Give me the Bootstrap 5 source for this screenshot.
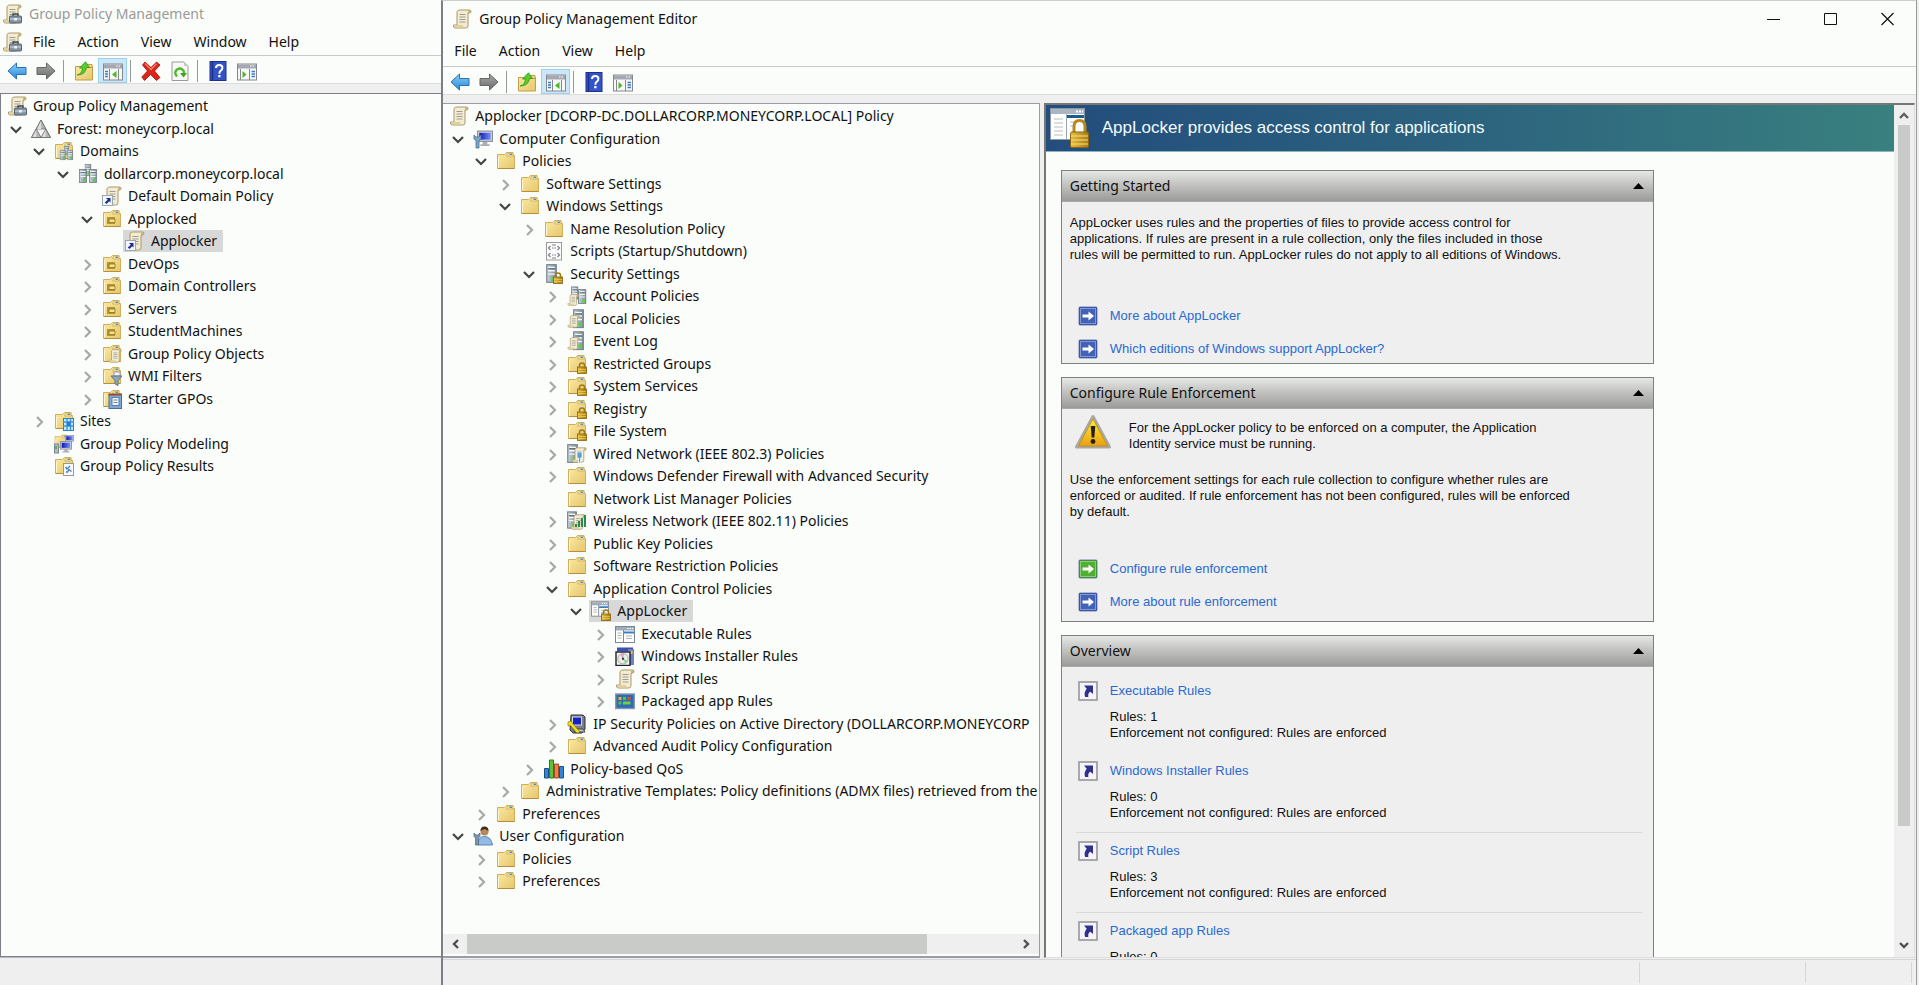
<!DOCTYPE html>
<html lang="en">
<head>
<meta charset="utf-8">
<meta name="viewport" content="width=device-width, initial-scale=1">
<title>Group Policy Management Editor</title>
<link rel="stylesheet" href="https://cdn.jsdelivr.net/npm/bootstrap@5.3.0/dist/css/bootstrap.min.css">
<style>
  :root { --paper: #fafdf9; --chrome: #efefef; --thumb: #c9cbc8; --line: #c9cacc; --edge: #7d7e88; }
  body { font: 14px/20px "Noto Sans", "Open Sans", sans-serif; color: #111; background: var(--chrome); }
  button { font: inherit; color: inherit; background: none; border: 0; padding: 0; }
  svg { display: block; flex: none; }
  .ico { width: 20px; height: 20px; }
  .manager { width: 23%; }
  .editor { border-left: 2px solid var(--edge); border-right: 1px solid #999; border-top: 1px solid #ccc; margin-right: 2px; min-width: 0; }
  .top-area { background: var(--paper); }
  .manager .title-row { height: 28px; padding-left: 2px; color: #9a9a9a; }
  .manager .menu-row { height: 28px; padding-left: 2px; }
  .editor .title-row { height: 35px; padding-left: 9px; }
  .editor .menu-row { height: 31px; }
  .title-row { gap: 7px; }
  .menu-row { border-bottom: 1px solid var(--line); }
  .menu-row button { padding: 0 11px; }
  .tools { height: 28px; padding: 2px 0 0 2px; border-bottom: 1px solid #dadbda; }
  .tools button { width: 29px; height: 25px; display: flex; align-items: center; justify-content: center; }
  .tools .pressed { background: #cce7f8; outline: 1px solid #9ad0f0; outline-offset: -1px; }
  .tools i { width: 1px; height: 22px; background: #999; margin: 0 5px 0 3px; }
  .gap-strip { height: 9px; }
  .pane { background: var(--paper); border: 1px solid var(--edge); }
  .manager .status { height: 28px; border-top: 1px solid #b9babf; }
  .editor .status { height: 28px; border-top: 1px solid #d6d6d6; margin-top: 1px; }
  .status div { border-right: 1px solid #d6d6d6; margin: 2px 0; }
  .tree { list-style: none; margin: 0; padding: 1px 0 0; overflow: hidden; flex: 1; min-height: 0; }
  .tree li { display: flex; align-items: center; height: 22px; white-space: nowrap; }
  .tree li:nth-child(even) { height: 23px; }
  .tree .exp { width: 21px; flex: none; height: 20px; }
  .tree .exp svg { width: 16px; height: 20px; }
  .node { display: flex; align-items: center; gap: 6px; padding: 0 6px 0 2px; height: 22px; }
  .node.sel { background: #d8d8d8; }
  .l0 { padding-left: 4px; } .l1 { padding-left: 7px; } .l2 { padding-left: 30px; } .l3 { padding-left: 54px; }
  .l4 { padding-left: 78px; } .l5 { padding-left: 101px; } .l6 { padding-left: 125px; } .l7 { padding-left: 149px; }
  .tree-pane { width: 40.5%; border-left: 0; border-width: 1px 1px 2px 0; border-color: #9b9ca4; }
  .hbar { height: 20px; background: var(--chrome); margin-bottom: 2px; }
  .vbar { width: 20px; padding-bottom: 2px; background: var(--chrome); }
  .hbar .track, .vbar .track { flex: 1; }
  .thumb { background: var(--thumb); }
  .detail-pane { margin-left: 4px; margin-right: 1px; border: 2px solid #777; border-width: 2px 1px 1px 2px; border-right-color: #ddd; border-bottom-color: #ddd; font: 13px/16px "Liberation Sans", Arial, sans-serif; }
  .hero { height: 47px; background: linear-gradient(90deg, #234d7d, #2c637e 50%, #39807f); color: #f2fbfb; font-size: 17px; border-bottom: 1px solid #8ab5bd; gap: 12px; padding-left: 4px; }
  .sheet { padding: 18px 16px 0 15px; }
  .box { width: 593px; max-width: 100%; background: var(--chrome); border: 1px solid #7e807d; margin-bottom: 13px; }
  .box-head { height: 31px; padding: 0 9px 0 8px; background: linear-gradient(#e6e8e5, #c3c4c2 45%, #9b9c9a); font: 14px/20px "Noto Sans", "Open Sans", sans-serif; border-bottom: 1px solid #aaa; }
  .box p { margin: 0; }
  .box a { color: #2a69cf; text-decoration: none; }
  .links { display: grid; gap: 13px; padding: 0 0 4px 16px; }
  .links.roomy { padding-bottom: 9px; }
  .links a, .rule a { display: flex; align-items: center; gap: 12px; height: 20px; width: max-content; }
  .intro { padding: 13px 8px 43px; }
  .usage { padding: 20px 8px 39px; }
  .warn { padding: 5px 12px 0; gap: 17px; }
  .warn p { padding-top: 6px; }
  .rules { padding-top: 14px; }
  .rule { height: 72px; border-bottom: 1px solid #d9d9d9; margin: 0 11px 8px 14px; }
  .rule.bare { border-color: transparent; }
  .rule a { padding-left: 2px; }
  .rule p { padding: 8px 0 0 34px; }
</style>
</head>
<body>
<svg width="0" height="0" class="position-absolute" aria-hidden="true">
  <defs>
    <linearGradient id="gf" x1="0" y1="0" x2="1" y2="1"><stop offset="0" stop-color="#fbeaa4"/><stop offset="1" stop-color="#e5c66c"/></linearGradient>
    <linearGradient id="gb" x1="0" y1="0" x2="0" y2="1"><stop offset="0" stop-color="#8fd0f8"/><stop offset="1" stop-color="#2586d6"/></linearGradient>
    <linearGradient id="gg" x1="0" y1="0" x2="0" y2="1"><stop offset="0" stop-color="#a9a9a9"/><stop offset="1" stop-color="#6a6a6a"/></linearGradient>
    <linearGradient id="gm" x1="0" y1="0" x2="1" y2="0"><stop offset="0" stop-color="#0b16b8"/><stop offset="1" stop-color="#7c90f5"/></linearGradient>
    <linearGradient id="gs" x1="0" y1="0" x2="1" y2="0"><stop offset="0" stop-color="#c9d3da"/><stop offset="1" stop-color="#7f8e99"/></linearGradient>
    <linearGradient id="gw" x1="0" y1="0" x2="0" y2="1"><stop offset="0" stop-color="#fff12e"/><stop offset="1" stop-color="#e8a012"/></linearGradient>
    <linearGradient id="gl" x1="0" y1="0" x2="1" y2="0"><stop offset="0" stop-color="#e6bd3e"/><stop offset="1" stop-color="#a97c0e"/></linearGradient>

    <symbol id="down" viewBox="0 0 16 20"><path d="M3 8l5 5 5-5" fill="none" stroke="#444" stroke-width="2.200"/></symbol>
    <symbol id="right" viewBox="0 0 16 20"><path d="M6 6l5 5-5 5" fill="none" stroke="#a8a8a8" stroke-width="2.200"/></symbol>
    <symbol id="sb-left" viewBox="0 0 16 16"><path d="M11 4L7 8l4 4" fill="none" stroke="#505050" stroke-width="2.4"/></symbol>
    <symbol id="sb-right" viewBox="0 0 16 16"><path d="M5 4l4 4-4 4" fill="none" stroke="#505050" stroke-width="2.4"/></symbol>
    <symbol id="sb-up" viewBox="0 0 16 16"><path d="M4 11l4-4 4 4" fill="none" stroke="#606060" stroke-width="2.4"/></symbol>
    <symbol id="sb-down" viewBox="0 0 16 16"><path d="M4 6l4 4 4-4" fill="none" stroke="#505050" stroke-width="2.4"/></symbol>

    <symbol id="scroll" viewBox="0 0 20 20"><path d="M5 2.5q1-1.5 3-1.500h9.500q1.500 0 1.500 1.500t-1.500 1.500h-1.500v12.500q0 2.500-2.500 2.500h-10q-2 0-2-2v-1h3.500z" fill="#f4ecd0" stroke="#a8986c" stroke-width="1"/><path d="M16 4V2.500q0-1.500 1.500-1.500T19 2.500 17.500 4z" fill="#c7ae72"/><path d="M2 16h9q0 2.500 2 2.500H4q-2 0-2-2.500z" fill="#e0d19c"/><path d="M7.500 5.500h6M7.500 8h6M7.500 10.500h6M7.500 13h6" stroke="#9b9b9b"/></symbol>
    <symbol id="gpm" viewBox="0 0 20 20"><use href="#scroll"/><path d="M11 12v-2h5v2" fill="none" stroke="#444" stroke-width="1.300"/><rect x="7.500" y="12" width="12" height="7" rx="1" fill="#8495a6" stroke="#55626f"/><path d="M8 15h11" stroke="#d3dbe2"/><rect x="12" y="14" width="3" height="2.500" fill="#eee"/></symbol>
    <symbol id="shortcut-s" viewBox="0 0 20 20"><rect x=".5" y="9.500" width="10" height="10" fill="#f4f4fa" stroke="#9aa"/><path d="M4 12h4.500v4.500L7.200 15.200 4.500 18 2.800 16.500l3-2.800z" fill="#1b2a94"/></symbol>
    <symbol id="scroll-link" viewBox="0 0 20 20"><use href="#scroll"/><use href="#shortcut-s"/></symbol>
    <symbol id="folder" viewBox="0 0 20 20"><path d="M1.500 3.500h7l2-2h6.500v3h1.500v13h-17z" fill="url(#gf)" stroke="#cfae5c"/><path d="M10.500 5l1.500-3h5v3z" fill="#f6e7a8" stroke="#cfae5c" stroke-width=".8"/><path d="M13.500 3.300h2.500" stroke="#3f93d8" stroke-width="1.400"/><path d="M2.500 6v10.500" stroke="#fff6cf"/><path d="M2 17.500h16.500" stroke="#b88f36"/></symbol>
    <symbol id="ou" viewBox="0 0 20 20"><use href="#folder"/><path d="M5 8h8v7H5z" fill="#b59636"/><path d="M7 10h6v3.500H7z" fill="#f5e38e" stroke="#8d6f1d" stroke-width=".8"/></symbol>
    <symbol id="srv" viewBox="0 0 8 14"><rect x=".5" y=".5" width="7" height="13" fill="url(#gs)" stroke="#6f7e89" stroke-width=".8"/><path d="M1.500 2.500h5M1.500 5h5M1.500 7.500h5" stroke="#f2f6f8"/><path d="M1.500 3.500h5" stroke="#4d5b66" stroke-width=".7"/><rect x="4" y="10" width="2.500" height="2.500" fill="#55d636"/></symbol>
    <symbol id="domain" viewBox="0 0 20 20"><use href="#srv" x="6.500" y="0" width="7" height="12"/><use href="#srv" x="1" y="5" width="8" height="14"/><use href="#srv" x="11" y="5" width="8" height="14"/></symbol>
    <symbol id="domains" viewBox="0 0 20 20"><use href="#folder"/><use href="#domain" x="5" y="5" width="15" height="15"/></symbol>
    <symbol id="forest" viewBox="0 0 20 20"><path d="M10 1l9.500 17.500H.5z" fill="#f5f5f5" stroke="#777"/><path d="M10 1l4.700 9H5.300zM5.300 10l4.700 8.500H.5zM14.700 10l4.800 8.500H10z" fill="#b4b4b4" stroke="#6f6f6f" stroke-width=".8"/><path d="M10 2v8H6zM5.300 11v7H1.500zM14.700 11v7H11z" fill="#dedede"/></symbol>
    <symbol id="gpo" viewBox="0 0 20 20"><use href="#folder"/><use href="#scroll" x="6" y="5" width="14" height="14"/></symbol>
    <symbol id="wmi" viewBox="0 0 20 20"><use href="#folder"/><rect x="12" y="6" width="6" height="4" fill="#f5f5ff" stroke="#99a"/><path d="M9 10h11l-4 4.500v5l-3-1.500v-3.500z" fill="#8fa6bb" stroke="#5d7488"/></symbol>
    <symbol id="starter" viewBox="0 0 20 20"><use href="#folder"/><rect x="7" y="5.500" width="12.500" height="14" fill="#7fa9d4" stroke="#4d6d94"/><path d="M6.500 5.500h13.500" stroke="#9a4a2c" stroke-width="2"/><rect x="10" y="8.500" width="7" height="8" fill="#eef5fb" stroke="#5a7faa"/><path d="M11.500 11h4M11.500 13.500h4" stroke="#789"/></symbol>
    <symbol id="sites" viewBox="0 0 20 20"><use href="#folder"/><rect x="9.500" y="7.500" width="10" height="12" fill="#c5e8fb" stroke="#2d7fc4"/><path d="M13 7v12M16.500 7v12M9 11h11M9 15h11" stroke="#3b93d9" stroke-width="1.300"/><rect x="13" y="11" width="3" height="4" fill="#2b78be"/></symbol>
    <symbol id="mon" viewBox="0 0 14 14"><rect x=".5" y=".5" width="13" height="9" fill="#cfd3dc" stroke="#8b8f9b"/><rect x="2" y="2" width="10" height="6" fill="url(#gm)"/><path d="M5 10h4v2h2v1.500H3V12h2z" fill="#a9adb6"/></symbol>
    <symbol id="model" viewBox="0 0 20 20"><use href="#folder" width="15" height="15"/><use href="#mon" x="11" y="1" width="9" height="9"/><use href="#mon" x="6" y="7" width="12" height="12"/><rect x=".5" y="10" width="4" height="9" fill="#b4bcc2" stroke="#7a858d"/><path d="M2 12v3" stroke="#2fb52f" stroke-width="1.500"/></symbol>
    <symbol id="results" viewBox="0 0 20 20"><use href="#folder"/><rect x="9.500" y="7.500" width="10" height="12" fill="#f8f8fc" stroke="#999"/><path d="M11.500 11l1.500 2 3-3M12 16h1.500l1.500-2.500 2.500 2" fill="none" stroke="#3d7fc0" stroke-width="1.300"/></symbol>
    <symbol id="computer" viewBox="0 0 20 20"><use href="#mon" x="4" y="1" width="16" height="17"/><path d="M1 6v4l2 1.500V19h3v-7.500L8 10V6L6 8H3z" fill="#7aa7cc" stroke="#4b6f8f" stroke-width=".8"/></symbol>
    <symbol id="user" viewBox="0 0 20 20"><circle cx="11.500" cy="5.500" r="4" fill="#b9875a"/><path d="M7.500 5q0-4.500 4-4.500t4 4.500q-3-2-4-2t-4 2z" fill="#3f2a1b"/><path d="M5 19q0-8.500 6.500-8.500T19.500 19z" fill="#8fbbe6" stroke="#5a86b5"/><path d="M1 7v3.500L2.500 12v7h3v-7L7 10.500V7L5 9H3z" fill="#7b97b0" stroke="#4d6478" stroke-width=".7"/></symbol>
    <symbol id="script" viewBox="0 0 20 20"><rect x="2.500" y="1.500" width="15" height="17.500" fill="#fbfbfb" stroke="#9c9c9c"/><path d="M6.500 5L4.500 7l2 2M13.500 5l2 2-2 2M6.500 12l-2 2 2 2M13.500 12l2 2-2 2M8 7h1.500M10.500 7h1.500M8 14h1.500M10.500 14h1.500M8 4h4M8 17h4" fill="none" stroke="#7f7f8a" stroke-width="1.200"/></symbol>
    <symbol id="lock" viewBox="0 0 10 12"><path d="M2.500 6V3.500q0-2.500 2.500-2.500t2.500 2.500V6" fill="none" stroke="#a07a18" stroke-width="1.500"/><rect x=".5" y="5" width="9" height="6.500" fill="url(#gl)" stroke="#86610a" stroke-width=".8"/><path d="M1 7.500h8M1 9.500h8" stroke="#f4d873" stroke-width=".6"/></symbol>
    <symbol id="security" viewBox="0 0 20 20"><use href="#srv" x="2" y="0" width="11" height="19"/><use href="#lock" x="9" y="8" width="10" height="12"/></symbol>
    <symbol id="account" viewBox="0 0 20 20"><use href="#srv" x="4" y="0" width="7.500" height="14"/><use href="#srv" x="11" y="2" width="8.500" height="17"/><use href="#scroll" x="0" y="8" width="12" height="12"/></symbol>
    <symbol id="local" viewBox="0 0 20 20"><use href="#srv" x="6" y="0" width="11" height="19.500"/><use href="#scroll" x="0" y="6" width="13" height="13"/></symbol>
    <symbol id="flock" viewBox="0 0 20 20"><use href="#folder"/><use href="#lock" x="10" y="8" width="10" height="12"/></symbol>
    <symbol id="wired" viewBox="0 0 20 20"><use href="#srv" x="0" y="0" width="11" height="19"/><use href="#scroll" x="4" y="3" width="16" height="16"/><path d="M10 8h5v6h-1.500v5h-2v-5H10z" fill="#5b9fd6" stroke="#fff" stroke-width=".7"/></symbol>
    <symbol id="wireless" viewBox="0 0 20 20"><use href="#srv" x="0" y="0" width="10" height="18"/><use href="#scroll" x="3" y="3" width="16" height="16"/><path d="M9 16v-3M12 16v-6M15 16V7M18 16V4" stroke="#2b8a4c" stroke-width="2"/></symbol>
    <symbol id="window" viewBox="0 0 20 20"><rect x=".5" y="2.500" width="19" height="16" fill="#fff" stroke="#7b8793"/><path d="M1 3h18v3.500H1z" fill="#9fadbb"/><path d="M12 4.500h6" stroke="#fff" stroke-dasharray="1.500 1"/><path d="M8.500 6v12" stroke="#7b8793"/><path d="M9 8.500h10" stroke="#3a7fc4" stroke-width="2"/><path d="M2.500 9h4M2.500 11.500h4M2.500 14h4M11 12h6M11 14.500h6" stroke="#b0b0b0"/></symbol>
    <symbol id="applocker" viewBox="0 0 20 20"><use href="#window" y="-2" width="18" height="19"/><use href="#lock" x="10" y="8" width="10" height="12"/></symbol>
    <symbol id="installer" viewBox="0 0 20 20"><path d="M2 1.500h16v4H2z" fill="#3c4fb5"/><rect x="13" y="3" width="6" height="16" fill="#6f7fc8"/><path d="M14 5h3.500v3H14z" fill="#e5c648"/><rect x="1" y="6" width="14" height="13.500" fill="#f2f2f2" stroke="#222" stroke-width="1.400"/><circle cx="8" cy="12.800" r="5.200" fill="#e8eee8" stroke="#999" stroke-width=".8"/><path d="M8 12.800L5 8.500l4-.7z" fill="#ec9ad4"/><path d="M8 12.800l4.500 2-2.500 2.500z" fill="#7fe08f"/><circle cx="8" cy="12.800" r="1.200" fill="#444"/></symbol>
    <symbol id="package" viewBox="0 0 20 20"><rect x=".7" y="3" width="18.600" height="14.500" fill="#2f6ab4" stroke="#8698ab" stroke-width="1.400"/><path d="M3.500 6h3v3h-3z" fill="#f2b51d"/><path d="M8 6h3v3H8zM3.500 10.500h3v3h-3z" fill="#55c436"/><path d="M12.500 6h3v3h-3z" fill="#e8492a"/><path d="M8 10.500h7.500v3H8z" fill="#6fd13e"/></symbol>
    <symbol id="ipsec" viewBox="0 0 20 20"><path d="M4 1h12l2 2v12l-3 4H6l-3-3z" fill="#7d7f88" stroke="#333"/><rect x="5.500" y="3" width="9" height="8" fill="#1523c4" stroke="#ddd"/><path d="M6 15h10l2 3H8z" fill="#c3c6cd" stroke="#444"/><path d="M1 8l3-1 1.500 2.500 7 8-1 1.500-2-.5-6-7-2.500.5z" fill="#f3e21c" stroke="#8b7d00" stroke-width=".7"/></symbol>
    <symbol id="qos" viewBox="0 0 20 20"><path d="M.5 9.500h4V19h-4z" fill="#2f86d8" stroke="#1b4f86"/><path d="M5.500 1h4v18h-4z" fill="#5cc23c" stroke="#2f7a1d"/><path d="M10.500 5h4v14h-4z" fill="#ef7f4c" stroke="#a54a20"/><path d="M15.500 7.500h4V19h-4z" fill="#2f86d8" stroke="#1b4f86"/></symbol>

    <symbol id="back" viewBox="0 0 20 20"><path d="M1 10l8.500-8v4.500H19v7H9.500V18z" fill="url(#gb)" stroke="#2673b4"/></symbol>
    <symbol id="fwd" viewBox="0 0 20 20"><path d="M19 10l-8.500-8v4.500H1v7h9.500V18z" fill="url(#gg)" stroke="#666"/></symbol>
    <symbol id="up" viewBox="0 0 20 20"><path d="M1.500 5.500h17v13.500h-17z" fill="url(#gf)" stroke="#c29d43"/><path d="M12 3.500h6v3h-6z" fill="#f4dc8c" stroke="#c29d43"/><path d="M3 14q5-1 5.500-7H5.500L11.500.8l4 5.700H12.500q-1 7.500-9.500 7.500z" fill="#56cf2c" stroke="#2d9415" stroke-width=".8"/></symbol>
    <symbol id="panel" viewBox="0 0 20 20"><rect x=".5" y="3" width="19" height="16" fill="#f6f7f8" stroke="#84878d"/><path d="M1 3.500h18v4H1z" fill="#a4a9b1"/><path d="M13 5h5" stroke="#fff" stroke-dasharray="1.500 1"/></symbol>
    <symbol id="pane-l" viewBox="0 0 20 20"><use href="#panel"/><path d="M6.500 8v11M15.500 8v11" stroke="#84878d"/><path d="M2 10.500h3M2 13h3M2 15.500h3" stroke="#3a7fc4" stroke-width="1.400"/><path d="M13.500 10v7L9 13.500z" fill="#4fb71f"/></symbol>
    <symbol id="pane-r" viewBox="0 0 20 20"><use href="#panel"/><path d="M3.500 8v11M12.500 8v11" stroke="#84878d"/><path d="M14.500 10.500h3.500M14.500 13h3.500M14.500 15.500h3.500" stroke="#3a7fc4" stroke-width="1.400"/><path d="M5.500 10v7l4-3.500z" fill="#4fb71f"/></symbol>
    <symbol id="delete" viewBox="0 0 20 20"><path d="M4 1l6 5.500L15.500 1l3.500 3-5.500 6 5.500 6.500-3.500 3-6-6-6 6L.8 16 6.500 10 1.500 4z" fill="#dd2418" stroke="#9c130b" stroke-width=".8"/><path d="M4 2.500l6 6 5.500-5.800" fill="none" stroke="#f58074" stroke-width="1.300"/></symbol>
    <symbol id="refresh" viewBox="0 0 20 20"><path d="M2 1h12l4 4v14.500H2z" fill="#f7f7f7" stroke="#9a9a9a"/><path d="M14 1v4h4z" fill="#ccc"/><path d="M7 15.500q-3.500-4 0-7 4-2.500 6.500 1.200.6 1.300.3 2.800" fill="none" stroke="#4dba2c" stroke-width="2.400"/><path d="M10 12h7l-3.500 4.500z" fill="#3fa521"/></symbol>
    <symbol id="help" viewBox="0 0 20 20"><rect x="2" y=".5" width="16" height="19" fill="#3453c9" stroke="#1d318c"/><path d="M4.500 1v18" stroke="#1d318c" stroke-width="1.500"/><path d="M8 7q0-3 3.200-3t3.200 2.700q0 2-1.600 3-1.400.9-1.400 3" fill="none" stroke="#fff" stroke-width="2"/><rect x="10.200" y="14" width="2.300" height="2.300" fill="#fff"/></symbol>

    <symbol id="go" viewBox="0 0 20 20"><rect x="1" y="1" width="18" height="18" rx="1" fill="currentColor" stroke="#2c4083" stroke-opacity=".6"/><rect x="2.500" y="2.500" width="15" height="15" fill="none" stroke="#fff" stroke-opacity=".35"/><path d="M4.500 8.500h6v-3L16 10l-5.500 4.500v-3h-6z" fill="#fff"/></symbol>
    <symbol id="jump" viewBox="0 0 20 20"><rect x="1" y="1" width="18" height="18" fill="#f5f5f9" stroke="#8e8e96" stroke-width="1.500"/><path d="M6 4.500h9v8.500l-2.700-2.300q-2.600 1.300-2 5.300H7.200q-1.700-4.500 1.500-8.300z" fill="#2e3288"/></symbol>
    <symbol id="caution" viewBox="0 0 38 36"><path d="M19 2.500L35.500 33h-33z" fill="url(#gw)" stroke="#a8a8a0" stroke-width="3" stroke-linejoin="round"/><path d="M19 5L33.500 32h-29z" fill="url(#gw)" stroke="#c98a10" stroke-width=".8"/><path d="M16.700 12h4.600l-1 11.500h-2.600z" fill="#2a1d0e"/><circle cx="19" cy="27.500" r="2.400" fill="#2a1d0e"/></symbol>
  </defs>
</svg>

<div class="d-flex vh-100 overflow-hidden">

  <section class="manager d-flex flex-column flex-shrink-0" aria-label="Group Policy Management">
    <div class="top-area">
      <div class="title-row d-flex align-items-center"><svg class="ico"><use href="#gpm"/></svg><span>Group Policy Management</span></div>
      <nav class="menu-row d-flex align-items-center"><svg class="ico"><use href="#gpm"/></svg><button>File</button><button>Action</button><button>View</button><button>Window</button><button>Help</button></nav>
      <div class="tools d-flex align-items-center" role="toolbar">
        <button aria-label="Back"><svg class="ico"><use href="#back"/></svg></button><button aria-label="Forward"><svg class="ico"><use href="#fwd"/></svg></button><i></i>
        <button aria-label="Up one level"><svg class="ico"><use href="#up"/></svg></button><button class="pressed" aria-label="Console tree"><svg class="ico"><use href="#pane-l"/></svg></button><i></i>
        <button aria-label="Delete"><svg class="ico"><use href="#delete"/></svg></button><button aria-label="Refresh"><svg class="ico"><use href="#refresh"/></svg></button><i></i>
        <button aria-label="Help"><svg class="ico"><use href="#help"/></svg></button><button aria-label="Action pane"><svg class="ico"><use href="#pane-r"/></svg></button>
      </div>
    </div>
    <div class="gap-strip"></div>
    <div class="pane d-flex flex-column flex-grow-1 border-end-0 overflow-hidden">
      <ul class="tree" role="tree">
        <li class="l0"><span class="node"><svg class="ico"><use href="#gpm"/></svg>Group Policy Management</span></li>
        <li class="l1"><button class="exp" aria-label="Collapse"><svg><use href="#down"/></svg></button><span class="node"><svg class="ico"><use href="#forest"/></svg>Forest: moneycorp.local</span></li>
        <li class="l2"><button class="exp" aria-label="Collapse"><svg><use href="#down"/></svg></button><span class="node"><svg class="ico"><use href="#domains"/></svg>Domains</span></li>
        <li class="l3"><button class="exp" aria-label="Collapse"><svg><use href="#down"/></svg></button><span class="node"><svg class="ico"><use href="#domain"/></svg>dollarcorp.moneycorp.local</span></li>
        <li class="l4"><span class="exp"></span><span class="node"><svg class="ico"><use href="#scroll-link"/></svg>Default Domain Policy</span></li>
        <li class="l4"><button class="exp" aria-label="Collapse"><svg><use href="#down"/></svg></button><span class="node"><svg class="ico"><use href="#ou"/></svg>Applocked</span></li>
        <li class="l5"><span class="exp"></span><span class="node sel"><svg class="ico"><use href="#scroll-link"/></svg>Applocker</span></li>
        <li class="l4"><button class="exp" aria-label="Expand"><svg><use href="#right"/></svg></button><span class="node"><svg class="ico"><use href="#ou"/></svg>DevOps</span></li>
        <li class="l4"><button class="exp" aria-label="Expand"><svg><use href="#right"/></svg></button><span class="node"><svg class="ico"><use href="#ou"/></svg>Domain Controllers</span></li>
        <li class="l4"><button class="exp" aria-label="Expand"><svg><use href="#right"/></svg></button><span class="node"><svg class="ico"><use href="#ou"/></svg>Servers</span></li>
        <li class="l4"><button class="exp" aria-label="Expand"><svg><use href="#right"/></svg></button><span class="node"><svg class="ico"><use href="#ou"/></svg>StudentMachines</span></li>
        <li class="l4"><button class="exp" aria-label="Expand"><svg><use href="#right"/></svg></button><span class="node"><svg class="ico"><use href="#gpo"/></svg>Group Policy Objects</span></li>
        <li class="l4"><button class="exp" aria-label="Expand"><svg><use href="#right"/></svg></button><span class="node"><svg class="ico"><use href="#wmi"/></svg>WMI Filters</span></li>
        <li class="l4"><button class="exp" aria-label="Expand"><svg><use href="#right"/></svg></button><span class="node"><svg class="ico"><use href="#starter"/></svg>Starter GPOs</span></li>
        <li class="l2"><button class="exp" aria-label="Expand"><svg><use href="#right"/></svg></button><span class="node"><svg class="ico"><use href="#sites"/></svg>Sites</span></li>
        <li class="l2"><span class="exp"></span><span class="node"><svg class="ico"><use href="#model"/></svg>Group Policy Modeling</span></li>
        <li class="l2"><span class="exp"></span><span class="node"><svg class="ico"><use href="#results"/></svg>Group Policy Results</span></li>
      </ul>
    </div>
    <div class="status"></div>
  </section>

  <section class="editor d-flex flex-column flex-grow-1" aria-label="Group Policy Management Editor">
    <div class="top-area">
      <div class="title-row d-flex align-items-center"><svg class="ico"><use href="#scroll"/></svg><span class="flex-grow-1">Group Policy Management Editor</span>
        <div class="d-flex">
          <button aria-label="Minimize" class="px-3"><svg width="25" height="14"><path d="M6 7.500h13" stroke="#111"/></svg></button>
          <button aria-label="Maximize" class="px-3"><svg width="25" height="14"><path d="M6.500 1.500h12v11h-12z" fill="none" stroke="#111"/></svg></button>
          <button aria-label="Close" class="px-3"><svg width="25" height="14"><path d="M6.500 1l12 12M18.500 1l-12 12" stroke="#111" stroke-width="1.200"/></svg></button>
        </div>
      </div>
      <nav class="menu-row d-flex align-items-center"><button>File</button><button>Action</button><button>View</button><button>Help</button></nav>
      <div class="tools d-flex align-items-center" role="toolbar">
        <button aria-label="Back"><svg class="ico"><use href="#back"/></svg></button><button aria-label="Forward"><svg class="ico"><use href="#fwd"/></svg></button><i></i>
        <button aria-label="Up one level"><svg class="ico"><use href="#up"/></svg></button><button class="pressed" aria-label="Console tree"><svg class="ico"><use href="#pane-l"/></svg></button><i></i>
        <button aria-label="Help"><svg class="ico"><use href="#help"/></svg></button><button aria-label="Action pane"><svg class="ico"><use href="#pane-r"/></svg></button>
      </div>
    </div>
    <div class="gap-strip"></div>
    <div class="d-flex flex-grow-1 overflow-hidden">
      <div class="pane tree-pane d-flex flex-column flex-shrink-0">
        <ul class="tree" role="tree">
          <li class="l0"><span class="node"><svg class="ico"><use href="#scroll"/></svg>Applocker [DCORP-DC.DOLLARCORP.MONEYCORP.LOCAL] Policy</span></li>
          <li class="l1"><button class="exp" aria-label="Collapse"><svg><use href="#down"/></svg></button><span class="node"><svg class="ico"><use href="#computer"/></svg>Computer Configuration</span></li>
          <li class="l2"><button class="exp" aria-label="Collapse"><svg><use href="#down"/></svg></button><span class="node"><svg class="ico"><use href="#folder"/></svg>Policies</span></li>
          <li class="l3"><button class="exp" aria-label="Expand"><svg><use href="#right"/></svg></button><span class="node"><svg class="ico"><use href="#folder"/></svg>Software Settings</span></li>
          <li class="l3"><button class="exp" aria-label="Collapse"><svg><use href="#down"/></svg></button><span class="node"><svg class="ico"><use href="#folder"/></svg>Windows Settings</span></li>
          <li class="l4"><button class="exp" aria-label="Expand"><svg><use href="#right"/></svg></button><span class="node"><svg class="ico"><use href="#folder"/></svg>Name Resolution Policy</span></li>
          <li class="l4"><span class="exp"></span><span class="node"><svg class="ico"><use href="#script"/></svg>Scripts (Startup/Shutdown)</span></li>
          <li class="l4"><button class="exp" aria-label="Collapse"><svg><use href="#down"/></svg></button><span class="node"><svg class="ico"><use href="#security"/></svg>Security Settings</span></li>
          <li class="l5"><button class="exp" aria-label="Expand"><svg><use href="#right"/></svg></button><span class="node"><svg class="ico"><use href="#account"/></svg>Account Policies</span></li>
          <li class="l5"><button class="exp" aria-label="Expand"><svg><use href="#right"/></svg></button><span class="node"><svg class="ico"><use href="#local"/></svg>Local Policies</span></li>
          <li class="l5"><button class="exp" aria-label="Expand"><svg><use href="#right"/></svg></button><span class="node"><svg class="ico"><use href="#local"/></svg>Event Log</span></li>
          <li class="l5"><button class="exp" aria-label="Expand"><svg><use href="#right"/></svg></button><span class="node"><svg class="ico"><use href="#flock"/></svg>Restricted Groups</span></li>
          <li class="l5"><button class="exp" aria-label="Expand"><svg><use href="#right"/></svg></button><span class="node"><svg class="ico"><use href="#flock"/></svg>System Services</span></li>
          <li class="l5"><button class="exp" aria-label="Expand"><svg><use href="#right"/></svg></button><span class="node"><svg class="ico"><use href="#flock"/></svg>Registry</span></li>
          <li class="l5"><button class="exp" aria-label="Expand"><svg><use href="#right"/></svg></button><span class="node"><svg class="ico"><use href="#flock"/></svg>File System</span></li>
          <li class="l5"><button class="exp" aria-label="Expand"><svg><use href="#right"/></svg></button><span class="node"><svg class="ico"><use href="#wired"/></svg>Wired Network (IEEE 802.3) Policies</span></li>
          <li class="l5"><button class="exp" aria-label="Expand"><svg><use href="#right"/></svg></button><span class="node"><svg class="ico"><use href="#folder"/></svg>Windows Defender Firewall with Advanced Security</span></li>
          <li class="l5"><span class="exp"></span><span class="node"><svg class="ico"><use href="#folder"/></svg>Network List Manager Policies</span></li>
          <li class="l5"><button class="exp" aria-label="Expand"><svg><use href="#right"/></svg></button><span class="node"><svg class="ico"><use href="#wireless"/></svg>Wireless Network (IEEE 802.11) Policies</span></li>
          <li class="l5"><button class="exp" aria-label="Expand"><svg><use href="#right"/></svg></button><span class="node"><svg class="ico"><use href="#folder"/></svg>Public Key Policies</span></li>
          <li class="l5"><button class="exp" aria-label="Expand"><svg><use href="#right"/></svg></button><span class="node"><svg class="ico"><use href="#folder"/></svg>Software Restriction Policies</span></li>
          <li class="l5"><button class="exp" aria-label="Collapse"><svg><use href="#down"/></svg></button><span class="node"><svg class="ico"><use href="#folder"/></svg>Application Control Policies</span></li>
          <li class="l6"><button class="exp" aria-label="Collapse"><svg><use href="#down"/></svg></button><span class="node sel"><svg class="ico"><use href="#applocker"/></svg>AppLocker</span></li>
          <li class="l7"><button class="exp" aria-label="Expand"><svg><use href="#right"/></svg></button><span class="node"><svg class="ico"><use href="#window"/></svg>Executable Rules</span></li>
          <li class="l7"><button class="exp" aria-label="Expand"><svg><use href="#right"/></svg></button><span class="node"><svg class="ico"><use href="#installer"/></svg>Windows Installer Rules</span></li>
          <li class="l7"><button class="exp" aria-label="Expand"><svg><use href="#right"/></svg></button><span class="node"><svg class="ico"><use href="#scroll"/></svg>Script Rules</span></li>
          <li class="l7"><button class="exp" aria-label="Expand"><svg><use href="#right"/></svg></button><span class="node"><svg class="ico"><use href="#package"/></svg>Packaged app Rules</span></li>
          <li class="l5"><button class="exp" aria-label="Expand"><svg><use href="#right"/></svg></button><span class="node"><svg class="ico"><use href="#ipsec"/></svg>IP Security Policies on Active Directory (DOLLARCORP.MONEYCORP</span></li>
          <li class="l5"><button class="exp" aria-label="Expand"><svg><use href="#right"/></svg></button><span class="node"><svg class="ico"><use href="#folder"/></svg>Advanced Audit Policy Configuration</span></li>
          <li class="l4"><button class="exp" aria-label="Expand"><svg><use href="#right"/></svg></button><span class="node"><svg class="ico"><use href="#qos"/></svg>Policy-based QoS</span></li>
          <li class="l3"><button class="exp" aria-label="Expand"><svg><use href="#right"/></svg></button><span class="node"><svg class="ico"><use href="#folder"/></svg>Administrative Templates: Policy definitions (ADMX files) retrieved from the</span></li>
          <li class="l2"><button class="exp" aria-label="Expand"><svg><use href="#right"/></svg></button><span class="node"><svg class="ico"><use href="#folder"/></svg>Preferences</span></li>
          <li class="l1"><button class="exp" aria-label="Collapse"><svg><use href="#down"/></svg></button><span class="node"><svg class="ico"><use href="#user"/></svg>User Configuration</span></li>
          <li class="l2"><button class="exp" aria-label="Expand"><svg><use href="#right"/></svg></button><span class="node"><svg class="ico"><use href="#folder"/></svg>Policies</span></li>
          <li class="l2"><button class="exp" aria-label="Expand"><svg><use href="#right"/></svg></button><span class="node"><svg class="ico"><use href="#folder"/></svg>Preferences</span></li>
        </ul>
        <div class="hbar d-flex align-items-center px-1">
          <button aria-label="Scroll left" class="me-1"><svg width="16" height="16"><use href="#sb-left"/></svg></button>
          <div class="track h-100"><div class="thumb h-100" style="width:83.3%"></div></div>
          <button aria-label="Scroll right"><svg width="16" height="16"><use href="#sb-right"/></svg></button>
        </div>
      </div>

      <div class="pane detail-pane d-flex flex-grow-1">
        <div class="flex-grow-1 overflow-hidden">
          <div class="hero d-flex align-items-center">
            <svg width="40" height="42" viewBox="0 0 40 42"><rect x=".5" y="1.500" width="34" height="31" fill="#fdfdfd" stroke="#8b97a5"/><path d="M1 2h33v5H1z" fill="#a8b6c4"/><path d="M26 4.500h7" stroke="#fff" stroke-width="2" stroke-dasharray="2 1"/><path d="M16.500 7v25" stroke="#9aa5b0"/><path d="M17 9.500h17" stroke="#1d5a8e" stroke-width="3"/><path d="M4 12h9M4 16h9M4 20h9M4 24h9M4 28h9M20 15h6M20 19h4" stroke="#bcbcbc"/><path d="M24 26v-6.500q0-6 5.500-6t5.500 6V26" fill="none" stroke="#b58a1c" stroke-width="3"/><rect x="20.500" y="25" width="18" height="15.500" rx="1.500" fill="url(#gl)" stroke="#8a6510"/><path d="M21 29h17M21 33h17M21 37h17" stroke="#f6df86"/></svg>
            <span>AppLocker provides access control for applications</span>
          </div>
          <div class="sheet">
            <section class="box">
              <div class="box-head d-flex align-items-center justify-content-between">Getting Started<button aria-label="Collapse"><svg width="11" height="6"><path d="M5.500 0L11 6H0z"/></svg></button></div>
              <p class="intro">AppLocker uses rules and the properties of files to provide access control for<br>applications. If rules are present in a rule collection, only the files included in those<br>rules will be permitted to run. AppLocker rules do not apply to all editions of Windows.</p>
              <div class="links">
                <a href="#"><svg class="ico" color="#4262b8"><use href="#go"/></svg>More about AppLocker</a>
                <a href="#"><svg class="ico" color="#4262b8"><use href="#go"/></svg>Which editions of Windows support AppLocker?</a>
              </div>
            </section>
            <section class="box">
              <div class="box-head d-flex align-items-center justify-content-between">Configure Rule Enforcement<button aria-label="Collapse"><svg width="11" height="6"><path d="M5.500 0L11 6H0z"/></svg></button></div>
              <div class="warn d-flex"><svg width="38" height="36"><use href="#caution"/></svg><p>For the AppLocker policy to be enforced on a computer, the Application<br>Identity service must be running.</p></div>
              <p class="usage">Use the enforcement settings for each rule collection to configure whether rules are<br>enforced or audited. If rule enforcement has not been configured, rules will be enforced<br>by default.</p>
              <div class="links roomy">
                <a href="#"><svg class="ico" color="#4fb02f"><use href="#go"/></svg>Configure rule enforcement</a>
                <a href="#"><svg class="ico" color="#4262b8"><use href="#go"/></svg>More about rule enforcement</a>
              </div>
            </section>
            <section class="box">
              <div class="box-head d-flex align-items-center justify-content-between">Overview<button aria-label="Collapse"><svg width="11" height="6"><path d="M5.500 0L11 6H0z"/></svg></button></div>
              <div class="rules">
                <div class="rule bare"><a href="#"><svg class="ico"><use href="#jump"/></svg>Executable Rules</a><p>Rules: 1<br>Enforcement not configured: Rules are enforced</p></div>
                <div class="rule"><a href="#"><svg class="ico"><use href="#jump"/></svg>Windows Installer Rules</a><p>Rules: 0<br>Enforcement not configured: Rules are enforced</p></div>
                <div class="rule"><a href="#"><svg class="ico"><use href="#jump"/></svg>Script Rules</a><p>Rules: 3<br>Enforcement not configured: Rules are enforced</p></div>
                <div class="rule"><a href="#"><svg class="ico"><use href="#jump"/></svg>Packaged app Rules</a><p>Rules: 0</p></div>
              </div>
            </section>
          </div>
        </div>
        <div class="vbar d-flex flex-column align-items-center">
          <button aria-label="Scroll up"><svg width="16" height="20"><use href="#sb-up"/></svg></button>
          <div class="track w-100 px-1"><div class="thumb w-100" style="height:86.6%"></div></div>
          <button aria-label="Scroll down"><svg width="16" height="20"><use href="#sb-down"/></svg></button>
        </div>
      </div>
    </div>
    <div class="status d-flex justify-content-end pe-1"><div class="flex-grow-1"></div><div style="width:11.3%"></div><div style="width:7.2%"></div></div>
  </section>
</div>
<script src="https://cdn.jsdelivr.net/npm/bootstrap@5.3.0/dist/js/bootstrap.bundle.min.js"></script>
</body>
</html>
